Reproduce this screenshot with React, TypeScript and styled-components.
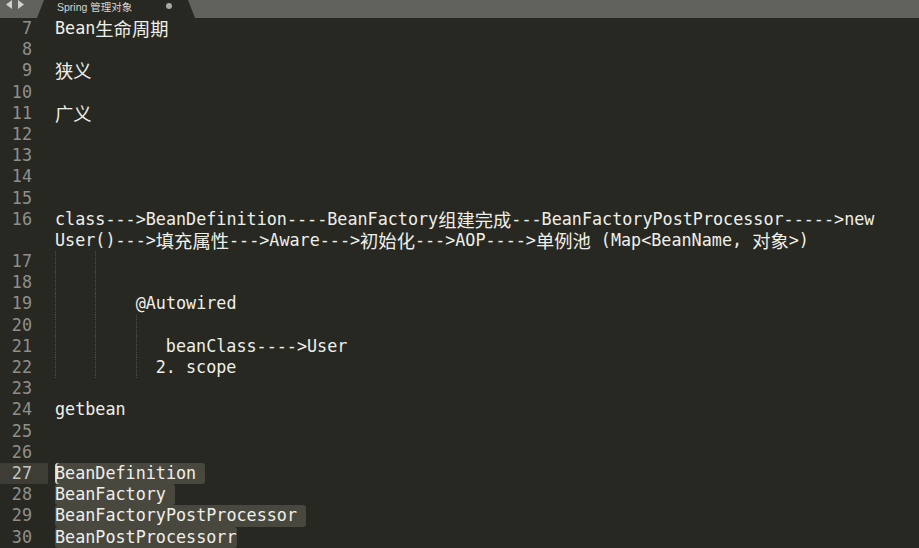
import React from "react";
import styled, { createGlobalStyle } from "styled-components";

const GlobalStyle = createGlobalStyle`
  html, body { margin: 0; padding: 0; background: #272822; overflow: hidden; }
  #root { width: 919px; height: 548px; }
`;

const ROW = 21.2;
const CH = 10.08;
const MONO = `"DejaVu Sans Mono", "Liberation Mono", monospace`;

const Window = styled.div`
  width: 919px;
  height: 548px;
  display: flex;
  flex-direction: column;
  background: #272822;
  overflow: hidden;
`;

const TabBar = styled.div`
  height: 18px;
  flex: none;
  display: flex;
  align-items: flex-end;
  background: #61625d;
`;

const NavArrows = styled.div`
  width: 37px;
  height: 18px;
  display: flex;
  align-items: flex-start;
  padding: 0 0 0 4px;
  box-sizing: border-box;
`;

const Tab = styled.div`
  width: 158px;
  height: 18px;
  background: #272822;
  clip-path: polygon(7px 0, calc(100% - 7px) 0, 100% 100%, 0 100%);
  display: flex;
  align-items: center;
  padding-left: 20px;
  box-sizing: border-box;
`;

const TabLabel = styled.span`
  font-family: "Liberation Sans", "Noto Sans CJK SC", sans-serif;
  font-size: 10.5px;
  color: #d6d6d2;
  flex: 1;
  margin-top: -6px;
`;

const ModDot = styled.span`
  width: 6px;
  height: 6px;
  border-radius: 50%;
  background: #a9a9a5;
  margin-right: 23px;
  margin-top: -7px;
`;

const Editor = styled.div`
  flex: 1;
  display: flex;
  flex-direction: column;
  font-family: ${MONO};
  font-size: 16.75px;
`;

const Row = styled.div`
  height: ${ROW}px;
  display: flex;
  flex: none;
`;

const Gutter = styled.div<{ $active?: boolean }>`
  width: 48px;
  flex: none;
  box-sizing: border-box;
  padding-right: 16px;
  text-align: right;
  line-height: ${ROW}px;
  color: ${(p) => (p.$active ? "#c4c4be" : "#8f908a")};
  background: ${(p) => (p.$active ? "#3e3d35" : "transparent")};
`;

const Code = styled.div`
  padding-left: 7px;
  white-space: pre;
  line-height: ${ROW}px;
  color: #efefe9;
  display: flex;
  align-items: stretch;
`;

const Han = styled.span`
  font-family: "Noto Sans CJK SC", sans-serif;
  font-size: 18.3px;
  line-height: ${ROW}px;
`;

const Indent = styled.span<{ $cols?: number }>`
  display: inline-block;
  width: ${(p) => (p.$cols ?? 4) * CH}px;
  height: ${ROW}px;
  border-left: 1px dotted #4e4f49;
  box-sizing: border-box;
  flex: none;
`;

const Sel = styled.span<{ $caret?: boolean; $trail?: boolean }>`
  display: inline-block;
  height: ${ROW}px;
  background: #49483f;
  border-radius: 3px;
  padding-right: ${(p) => (p.$trail ? "9px" : "0")};
  box-shadow: ${(p) => (p.$caret ? "inset 2px 0 0 #d0d0cb" : "none")};
`;

type Line = { n?: number; content?: React.ReactNode; active?: boolean };

const H = ({ children }: { children: string }) => <Han>{children}</Han>;

const lines: Line[] = [
  { n: 7, content: <>Bean<H>生命周期</H></> },
  { n: 8 },
  { n: 9, content: <H>狭义</H> },
  { n: 10 },
  { n: 11, content: <H>广义</H> },
  { n: 12 },
  { n: 13 },
  { n: 14 },
  { n: 15 },
  {
    n: 16,
    content: (
      <>
        {"class--->BeanDefinition----BeanFactory"}
        <H>组建完成</H>
        {"---BeanFactoryPostProcessor----->new"}
      </>
    ),
  },
  {
    content: (
      <>
        {"User()--->"}
        <H>填充属性</H>
        {"--->Aware--->"}
        <H>初始化</H>
        {"--->AOP---->"}
        <H>单例池</H>
        {" (Map<BeanName, "}
        <H>对象</H>
        {">)"}
      </>
    ),
  },
  { n: 17, content: <><Indent /><Indent /></> },
  { n: 18, content: <><Indent /><Indent /></> },
  { n: 19, content: <><Indent /><Indent />@Autowired</> },
  { n: 20, content: <><Indent /><Indent /><Indent /></> },
  { n: 21, content: <><Indent /><Indent /><Indent $cols={3} />beanClass----&gt;User</> },
  { n: 22, content: <><Indent /><Indent /><Indent $cols={2} />2. scope</> },
  { n: 23 },
  { n: 24, content: "getbean" },
  { n: 25 },
  { n: 26 },
  { n: 27, active: true, content: <Sel $caret $trail>BeanDefinition</Sel> },
  { n: 28, content: <Sel $trail>BeanFactory</Sel> },
  { n: 29, content: <Sel $trail>BeanFactoryPostProcessor</Sel> },
  { n: 30, content: <Sel>BeanPostProcessorr</Sel> },
];

const Arrow = ({ dir }: { dir: "l" | "r" }) => (
  <svg width="11" height="9" viewBox="0 0 11 9">
    {dir === "l" ? (
      <path d="M2 4.5 L8 0 L8 9 Z" fill="#cfcfcb" />
    ) : (
      <path d="M9 4.5 L3 0 L3 9 Z" fill="#cfcfcb" />
    )}
  </svg>
);

export default function App() {
  return (
    <>
      <GlobalStyle />
      <Window>
        <TabBar>
          <NavArrows>
            <Arrow dir="l" />
            <Arrow dir="r" />
          </NavArrows>
          <Tab>
            <TabLabel>Spring 管理对象</TabLabel>
            <ModDot />
          </Tab>
        </TabBar>
        <Editor>
          {lines.map((l, i) => (
            <Row key={i}>
              <Gutter $active={l.active}>{l.n ?? ""}</Gutter>
              <Code>{l.content}</Code>
            </Row>
          ))}
        </Editor>
      </Window>
    </>
  );
}
